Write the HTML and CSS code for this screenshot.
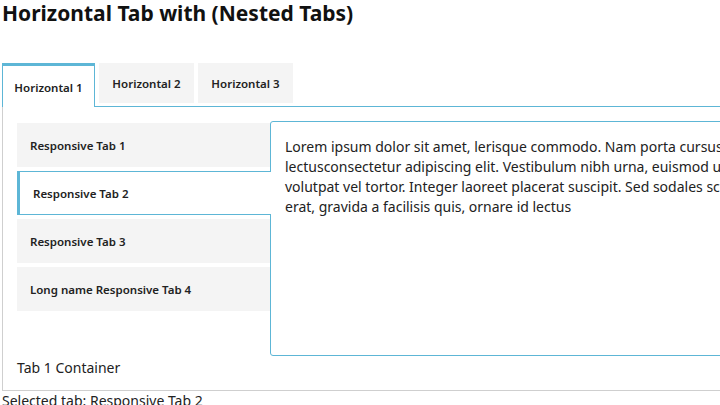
FILE: index.html
```html
<!DOCTYPE html>
<html>
<head>
<meta charset="utf-8">
<link rel="stylesheet" href="styles.css">
</head>
<body>
<h1 class="title">Horizontal Tab with (Nested Tabs)</h1>
<div class="htabs">
  <div class="htab active">Horizontal 1</div>
  <div class="htab">Horizontal 2</div>
  <div class="htab">Horizontal 3</div>
</div>
<div class="container">
  <div class="nested">
    <div class="vtabs">
      <div class="vtab">Responsive Tab 1</div>
      <div class="vtab active">Responsive Tab 2</div>
      <div class="vtab">Responsive Tab 3</div>
      <div class="vtab">Long name Responsive Tab 4</div>
    </div>
    <div class="panel">
      <span class="line">Lorem ipsum dolor sit amet, lerisque commodo. Nam porta cursus</span>
      <span class="line">lectusconsectetur adipiscing elit. Vestibulum nibh urna, euismod ut ornare non,</span>
      <span class="line">volutpat vel tortor. Integer laoreet placerat suscipit. Sed sodales scelerisque commodo.</span>
      <span class="line">erat, gravida a facilisis quis, ornare id lectus</span>
    </div>
  </div>
  <div class="caption">Tab 1 Container</div>
</div>
<div class="selected">Selected tab: Responsive Tab 2</div>
</body>
</html>
```
FILE: styles.css
```css
html { overflow: hidden; }
body {
  margin: 0;
  padding: 0 2px;
  font-family: "Noto Sans", "Open Sans", sans-serif;
  color: #222;
  background: #fff;
  width: 960px;
}
.title {
  margin: 0;
  font-size: 21px;
  line-height: 26px;
  font-weight: 700;
  color: #111;
  height: 63px;
}
.htabs {
  display: flex;
  align-items: flex-start;
  gap: 4px;
  border-bottom: 1px solid #5db6d6;
}
.htab {
  height: 40px;
  width: 95px;
  box-sizing: border-box;
  background: #f4f4f4;
  font-size: 11.5px;
  font-weight: 600;
  display: flex;
  align-items: center;
  justify-content: center;
  color: #222;
}
.htab.active {
  width: 93px;
  height: 44px;
  margin-bottom: -1px;
  background: #fff;
  border: 1px solid #5db6d6;
  border-top: 3px solid #5db6d6;
  border-bottom: none;
  padding-top: 2px;
}
.container {
  border: 1px solid #cfcfcf;
  border-top: none;
  padding: 14px 0 12px 14px;
}
.nested {
  display: flex;
  align-items: flex-start;
}
.vtabs {
  width: 253px;
  margin-top: 2px;
  display: flex;
  flex-direction: column;
  gap: 4px;
  position: relative;
  z-index: 1;
}
.vtab {
  height: 44px;
  box-sizing: border-box;
  background: #f4f4f4;
  font-size: 11.5px;
  font-weight: 600;
  padding-left: 13px;
  display: flex;
  align-items: center;
}
.vtab.active {
  background: #fff;
  border: 1px solid #5db6d6;
  border-left: 3px solid #5db6d6;
  border-right: none;
  margin-right: -1px;
  padding-left: 13px;
}
.panel {
  flex: 1;
  height: 235px;
  box-sizing: border-box;
  border: 1px solid #5db6d6;
  border-radius: 3px;
  padding: 15px 14px 10px;
  font-size: 14px;
  line-height: 20px;
  color: #222;
}
.line { display: block; white-space: nowrap; }
.caption {
  font-size: 14px;
  line-height: 20px;
  margin-top: 2px;
}
.selected {
  font-size: 14px;
  line-height: 20px;
}
```
